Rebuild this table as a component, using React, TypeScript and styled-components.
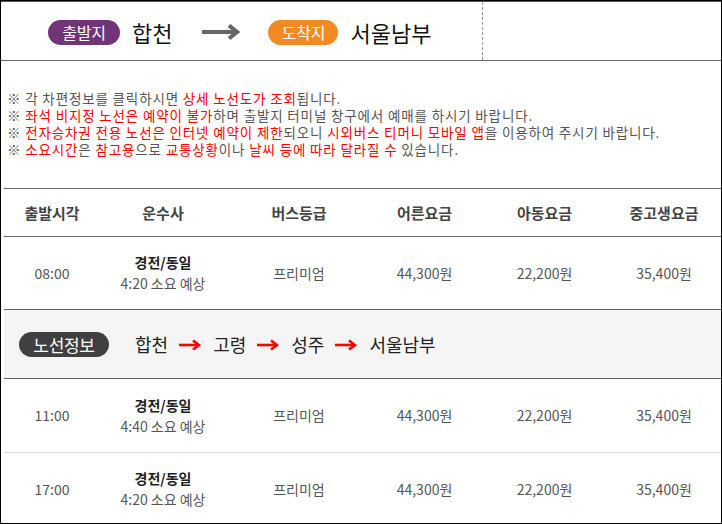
import React from "react";
import styled, { createGlobalStyle } from "styled-components";

const Global = createGlobalStyle`
  html, body { margin: 0; padding: 0; background: #fff; }
  * { box-sizing: border-box; }
`;

const FONT = `"Noto Sans CJK KR", "Noto Sans", sans-serif`;

const Frame = styled.div`
  width: 722px;
  height: 524px;
  border: 1px solid #000;
  overflow: hidden;
  background: #fff;
  font-family: ${FONT};
`;

const Header = styled.header`
  display: flex;
  height: 60px;
  border-top: 1px solid #555;
  border-bottom: 1px solid #666;
`;

const HeaderMain = styled.div`
  width: 482px;
  display: flex;
  align-items: center;
  padding: 2px 0 0 47px;
  border-right: 1px dashed #999;
`;

const Pill = styled.span<{ $bg: string; $w: number; $size: number }>`
  display: inline-flex;
  align-items: center;
  justify-content: center;
  flex: none;
  width: ${(p) => p.$w}px;
  height: 25px;
  border-radius: 13px;
  background: ${(p) => p.$bg};
  color: #fff;
  font-size: ${(p) => p.$size}px;
  line-height: 1;
  letter-spacing: -0.3px;
`;

const Place = styled.span`
  font-size: 22px;
  line-height: 1;
  color: #111;
  margin-left: 12px;
`;

const BigArrow = styled.svg`
  width: 38px;
  height: 16px;
  margin: 0 28px 0 30px;
  flex: none;
`;

const Notice = styled.div`
  height: 127px;
  padding: 29px 0 0 6px;
  font-size: 13.5px;
  line-height: 17px;
  color: #555;
  letter-spacing: 0.85px;
  white-space: nowrap;
`;

const NoticeLine = styled.div`
  height: 17px;
`;

const Red = styled.span`
  color: #f00;
`;

const Table = styled.div`
  margin-left: 3px;
  border-top: 1px solid #666;
`;

const Row = styled.div<{ $h: number; $line: string }>`
  display: grid;
  grid-template-columns: 96px 126px 146px 105px 135px 1fr;
  height: ${(p) => p.$h + 1}px;
  border-bottom: 1px solid ${(p) => p.$line};
`;

const Cell = styled.div<{ $head?: boolean }>`
  display: flex;
  flex-direction: column;
  align-items: center;
  justify-content: center;
  font-size: ${(p) => (p.$head ? 15 : 14)}px;
  font-weight: ${(p) => (p.$head ? 700 : 400)};
  color: ${(p) => (p.$head ? "#444" : "#555")};
  line-height: 21px;
  &:last-child { padding-right: 5px; }
`;

const Company = styled.strong`
  font-weight: 700;
  color: #222;
`;

const RouteRow = styled.div`
  display: flex;
  align-items: center;
  height: 69px;
  padding-left: 15px;
  background: #f5f5f5;
  border-bottom: 1px solid #666;
`;

const Stop = styled.span`
  font-size: 18px;
  line-height: 1;
  color: #222;
`;

const SmallArrow = styled.svg`
  width: 22px;
  height: 12px;
  margin: 1px 12px 0 11px;
  flex: none;
`;

const RouteLabel = styled(Pill)`
  margin-right: 26px;
`;

const Arrow = () => (
  <SmallArrow viewBox="0 0 22 12">
    <path d="M0 6H19" stroke="#f00" strokeWidth="2.6" />
    <path d="M14 1.5L20 6L14 10.5" stroke="#f00" strokeWidth="2.6" fill="none" />
  </SmallArrow>
);

const trips = [
  { time: "08:00", dur: "4:20", h: 72, line: "#666" },
  { time: "11:00", dur: "4:40", h: 73, line: "#ddd" },
  { time: "17:00", dur: "4:20", h: 72, line: "#ddd" },
];

const TripRow = ({ time, dur, h, line }: { time: string; dur: string; h: number; line: string }) => (
  <Row $h={h} $line={line}>
    <Cell>{time}</Cell>
    <Cell>
      <Company>경전/동일</Company>
      <span>{dur} 소요 예상</span>
    </Cell>
    <Cell>프리미엄</Cell>
    <Cell>44,300원</Cell>
    <Cell>22,200원</Cell>
    <Cell>35,400원</Cell>
  </Row>
);

export default function App() {
  return (
    <Frame>
      <Global />
      <Header>
        <HeaderMain>
          <Pill $bg="#6f3577" $w={72} $size={16}>출발지</Pill>
          <Place>합천</Place>
          <BigArrow viewBox="0 0 38 16">
            <path d="M0 8H34" stroke="#666" strokeWidth="4" />
            <path d="M27 1.5L35 8L27 14.5" stroke="#666" strokeWidth="4" fill="none" />
          </BigArrow>
          <Pill $bg="#f28a24" $w={70} $size={16}>도착지</Pill>
          <Place>서울남부</Place>
        </HeaderMain>
      </Header>
      <Notice>
        <NoticeLine>※ 각 차편정보를 클릭하시면 <Red>상세 노선도가 조회</Red>됩니다.</NoticeLine>
        <NoticeLine>※ <Red>좌석 비지정 노선은 예약이 불가</Red>하며 출발지 터미널 창구에서 예매를 하시기 바랍니다.</NoticeLine>
        <NoticeLine>
          ※ <Red>전자승차권 전용 노선은 인터넷 예약이 제한</Red>되오니 <Red>시외버스 티머니 모바일 앱</Red>을 이용하여 주시기 바랍니다.
        </NoticeLine>
        <NoticeLine>
          ※ <Red>소요시간</Red>은 <Red>참고용</Red>으로 <Red>교통상황</Red>이나 <Red>날씨 등에 따라 달라질 수</Red> 있습니다.
        </NoticeLine>
      </Notice>
      <Table>
        <Row $h={47} $line="#666">
          <Cell $head>출발시각</Cell>
          <Cell $head>운수사</Cell>
          <Cell $head>버스등급</Cell>
          <Cell $head>어른요금</Cell>
          <Cell $head>아동요금</Cell>
          <Cell $head>중고생요금</Cell>
        </Row>
        <TripRow {...trips[0]} />
        <RouteRow>
          <RouteLabel $bg="#404040" $w={90} $size={17}>노선정보</RouteLabel>
          <Stop>합천</Stop>
          <Arrow />
          <Stop>고령</Stop>
          <Arrow />
          <Stop>성주</Stop>
          <Arrow />
          <Stop>서울남부</Stop>
        </RouteRow>
        <TripRow {...trips[1]} />
        <TripRow {...trips[2]} />
      </Table>
    </Frame>
  );
}
